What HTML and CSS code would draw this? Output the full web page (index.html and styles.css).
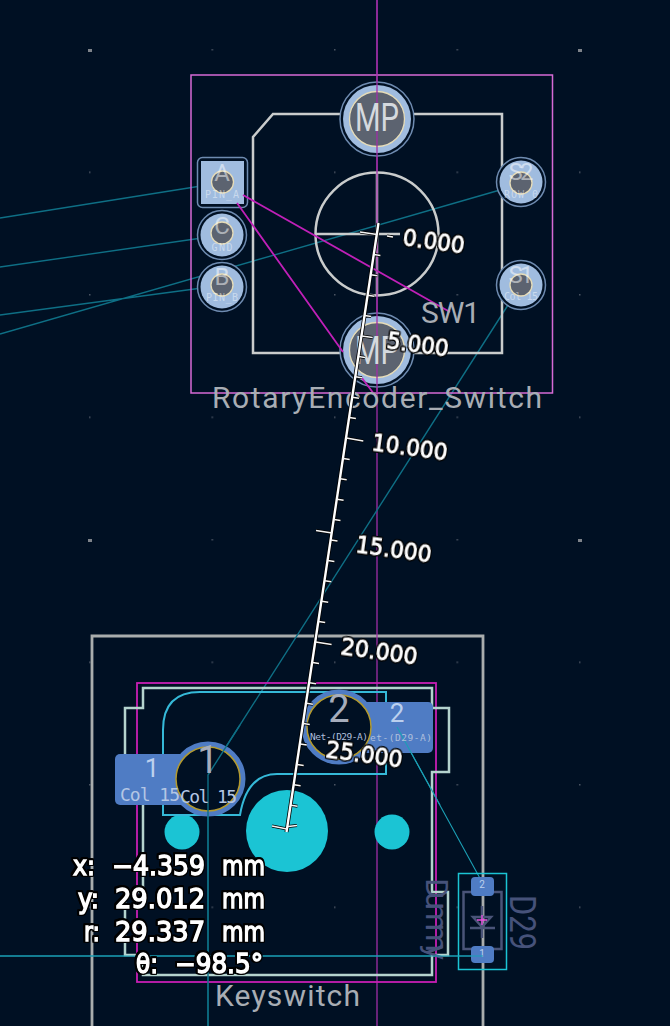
FILE: index.html
```html
<!DOCTYPE html>
<html lang="en">
<head>
    <meta charset="UTF-8">
    <meta name="viewport" content="width=device-width, initial-scale=1.0">
    <title>PCB Editor - Measure Tool</title>
    <link rel="stylesheet" href="styles.css">
</head>
<body>
    <svg id="board" width="670" height="1026" viewBox="0 0 670 1026">
        <defs>
            <pattern id="grid-small" x="89" y="49" width="122.5" height="122.5" patternUnits="userSpaceOnUse">
                <rect class="grid-dot" width="1.500" height="1.500"></rect>
            </pattern>
            <pattern id="grid-big" x="88" y="49" width="490" height="490" patternUnits="userSpaceOnUse">
                <rect class="grid-dot-big" width="4" height="3"></rect>
            </pattern>
            <path id="ruler-main" d="M378.5 223L286.5 832"></path>
            <path id="ruler-ticks" d="M360 232L377 234.500M387 236L393 237
                M373.9 254.4l6.500 1M370.900 274.800l6.500 1M367.800 295.200l6.500 1M364.700 315.600l6.500 1
                M361.700 336l11 1.500M358.600 356.400l6.500 1M355.500 376.800l6.500 1M352.400 397.200l6.500 1M349.400 417.600l6.500 1
                M346.300 438l17 3M343.200 458.400l6.500 1M340.200 478.800l6.500 1M337.100 499.200l6.500 1M334 519.600l6.500 1
                M331 540l6.500 1M332 533l-16 -2.500M327.900 560.400l6.500 1M324.800 580.800l6.500 1M321.700 601.200l6.500 1M318.700 621.600l6.500 1
                M315.600 642l16 2.500M312.500 662.400l6.500 1M309.500 682.800l6.500 1M306.400 703.200l6.500 1M303.300 723.600l6.500 1
                M300.300 744l6.500 1M297.200 764.400l6.500 1M294.100 784.800l6.500 1M291 805.200l6.500 1
                M288 826.500l9 -1M272 826L287 829"></path>
        </defs>

        <rect class="grid" width="670" height="1026" fill="url(#grid-small)"></rect>
        <rect class="grid" width="670" height="1026" fill="url(#grid-big)"></rect>

        <!-- keyswitch footprint, under everything else -->
        <path class="outer-box" d="M92 1030V636H483V1030"></path>
        <line class="axis" x1="377" y1="0" x2="377" y2="1026"></line>

        <!-- ratsnest -->
        <path class="rats" d="M0 218L201 186M0 267L202 238M0 315L202 288M0 334L500 190M208 1026V775L508 305"></path>
        <path class="rats-bright" d="M0 956H483M397 727L482 882"></path>

        <!-- encoder -->
        <rect class="courtyard-pink" x="191" y="75" width="361.500" height="318"></rect>
        <path class="silk" d="M273 114H502V353H253V137Z"></path>
        <circle class="silk" cx="377" cy="234" r="61.500"></circle>
        <path class="silk" d="M316 234H400M377 173V295"></path>

        <g class="pad-tht">
            <circle class="ring" cx="377" cy="119" r="37"></circle>
            <circle class="copper" cx="377" cy="119" r="34"></circle>
            <circle class="hole" cx="377" cy="119" r="27.500"></circle>
            <circle class="ring" cx="377" cy="350" r="37"></circle>
            <circle class="copper" cx="377" cy="350" r="34"></circle>
            <circle class="hole" cx="377" cy="350" r="27.500"></circle>

            <rect class="ring" x="197.500" y="157.500" width="50" height="50" rx="5"></rect>
            <rect class="copper" x="201" y="161" width="43" height="43"></rect>
            <circle class="hole" cx="222.500" cy="182" r="11"></circle>

            <circle class="ring" cx="222" cy="235" r="24.500"></circle>
            <circle class="copper" cx="222" cy="235" r="21.500"></circle>
            <circle class="hole" cx="222" cy="233" r="11"></circle>

            <circle class="ring" cx="222" cy="287" r="24.500"></circle>
            <circle class="copper" cx="222" cy="287" r="21.500"></circle>
            <circle class="hole" cx="222" cy="285" r="11"></circle>

            <circle class="ring" cx="521" cy="182" r="24.500"></circle>
            <circle class="copper" cx="521" cy="182" r="21.500"></circle>
            <circle class="hole" cx="521" cy="183" r="11"></circle>

            <circle class="ring" cx="521" cy="285" r="24.500"></circle>
            <circle class="copper" cx="521" cy="285" r="21.500"></circle>
            <circle class="hole" cx="521" cy="285" r="11"></circle>
        </g>

        <path class="rats-pink" d="M243 195L450 312M237 203L343 352M362 378L377 398"></path>
        <line class="axis" x1="377" y1="0" x2="377" y2="393"></line>

        <text class="pad-big" x="377" y="131" text-anchor="middle" textLength="44" lengthAdjust="spacingAndGlyphs">MP</text>
        <text class="pad-big" x="377" y="364" text-anchor="middle" textLength="44" lengthAdjust="spacingAndGlyphs">MP</text>
        <text class="pad-mid" x="222" y="181" text-anchor="middle">A</text>
        <text class="pad-small" x="222" y="198" text-anchor="middle" textLength="34">PIN_A</text>
        <text class="pad-mid" x="222" y="234" text-anchor="middle">C</text>
        <text class="pad-small" x="222" y="251" text-anchor="middle" textLength="21">GND</text>
        <text class="pad-mid" x="222" y="285" text-anchor="middle">B</text>
        <text class="pad-small" x="222" y="301" text-anchor="middle" textLength="32">PIN_B</text>
        <text class="pad-mid" x="521" y="180" text-anchor="middle" textLength="25">S2</text>
        <text class="pad-small" x="521" y="198" text-anchor="middle" textLength="34">ROW 0</text>
        <text class="pad-mid" x="521" y="283" text-anchor="middle" textLength="25">S1</text>
        <text class="pad-small" x="521" y="300" text-anchor="middle" textLength="34">Col 15</text>

        <text class="ref" x="421" y="323" textLength="59">SW1</text>
        <text class="ref" x="212" y="408" textLength="330">RotaryEncoder_Switch</text>

        <!-- keyswitch -->
        <circle class="cyan-fill" cx="287" cy="831" r="41"></circle>
        <circle class="cyan-fill" cx="182" cy="832" r="17.500"></circle>
        <circle class="cyan-fill" cx="392" cy="832" r="17.500"></circle>

        <rect class="courtyard" x="137" y="683" width="299" height="299"></rect>
        <path class="fab" d="M143 708V688H432V708H449V772H432V892H448V955H432V975H143V955H125V892H143V772H125V708Z"></path>
        <path class="edge" d="M386 692H200Q163 692 163 730V815H240Q247 774 277 774H386Z"></path>

        <rect class="smd" x="115" y="754" width="100" height="51" rx="5"></rect>
        <rect class="smd" x="360" y="702" width="73" height="51" rx="5"></rect>
        <circle class="tht-ring" cx="208" cy="779" r="34.500"></circle>
        <circle class="tht-ring" cx="339" cy="727" r="34.500"></circle>
        <circle class="tht-hole" cx="208" cy="779" r="32"></circle>
        <circle class="tht-hole" cx="339" cy="727" r="32"></circle>

        <path class="rats" d="M208 1026V775L240 725"></path>
        <path class="rats-bright" d="M397 727L440 805"></path>

        <text class="fp-mid" x="152" y="777" text-anchor="middle">1</text>
        <text class="fp-note" x="120" y="801" textLength="60">Col 15</text>
        <text class="fp-big" x="208" y="773" text-anchor="middle">1</text>
        <text class="fp-note" x="180" y="803" textLength="57">Col 15</text>
        <text class="fp-big" x="339" y="722" text-anchor="middle">2</text>
        <text class="fp-tiny" x="310" y="740" textLength="58">Net-(D29-A)</text>
        <text class="fp-mid" x="397" y="722" text-anchor="middle">2</text>
        <text class="fp-tiny" x="370" y="741" textLength="62">et-(D29-A)</text>
        <text class="ref" x="215" y="1006" textLength="145">Keyswitch</text>

        <!-- diode -->
        <text class="dim-text dummy" transform="translate(426 878) rotate(90)" textLength="82">Dummy</text>
        <rect class="diode-body" x="463.500" y="892" width="38" height="57"></rect>
        <path class="diode-sym" d="M482 906V938M470 928H495M473 917H491L482 927Z"></path>
        <rect class="cyan-box" x="458.500" y="873.500" width="48" height="96"></rect>
        <rect class="smd" x="471" y="877" width="23" height="19" rx="4"></rect>
        <rect class="smd" x="471" y="946" width="23" height="17" rx="4"></rect>
        <text class="diode-pad" x="482" y="888" text-anchor="middle">2</text>
        <text class="diode-pad" x="482" y="957" text-anchor="middle">1</text>
        <path class="cross" d="M477 920H487M482 915V925"></path>
        <text class="dim-text" transform="translate(510 895) rotate(90)" textLength="55" lengthAdjust="spacingAndGlyphs">D29</text>
        <path class="rats-bright" d="M0 956H483"></path>

        <!-- measure tool -->
        <use href="#ruler-main" class="ruler-shadow main"></use>
        <use href="#ruler-ticks" class="ruler-shadow"></use>
        <use href="#ruler-main" class="ruler-line main"></use>
        <use href="#ruler-ticks" class="ruler-line"></use>

        <text class="tick-label" transform="translate(402 245) rotate(8)" textLength="62" lengthAdjust="spacingAndGlyphs">0.000</text>
        <text class="tick-label" transform="translate(386 348) rotate(8)" textLength="62" lengthAdjust="spacingAndGlyphs">5.000</text>
        <text class="tick-label" transform="translate(371 450) rotate(8)" textLength="76" lengthAdjust="spacingAndGlyphs">10.000</text>
        <text class="tick-label" transform="translate(355 552) rotate(8)" textLength="76" lengthAdjust="spacingAndGlyphs">15.000</text>
        <text class="tick-label" transform="translate(340 654) rotate(8)" textLength="77" lengthAdjust="spacingAndGlyphs">20.000</text>
        <text class="tick-label" transform="translate(325 757) rotate(8)" textLength="77" lengthAdjust="spacingAndGlyphs">25.000</text>

        <text class="readout" x="73" y="875" textLength="22" lengthAdjust="spacingAndGlyphs">x:</text>
        <text class="readout" x="112" y="875" textLength="93" lengthAdjust="spacingAndGlyphs">−4.359</text>
        <text class="readout" x="222" y="875" textLength="43" lengthAdjust="spacingAndGlyphs">mm</text>
        <text class="readout" x="78" y="908" textLength="21" lengthAdjust="spacingAndGlyphs">y:</text>
        <text class="readout" x="115" y="908" textLength="90" lengthAdjust="spacingAndGlyphs">29.012</text>
        <text class="readout" x="222" y="908" textLength="43" lengthAdjust="spacingAndGlyphs">mm</text>
        <text class="readout" x="84" y="941" textLength="16" lengthAdjust="spacingAndGlyphs">r:</text>
        <text class="readout" x="115" y="941" textLength="90" lengthAdjust="spacingAndGlyphs">29.337</text>
        <text class="readout" x="222" y="941" textLength="43" lengthAdjust="spacingAndGlyphs">mm</text>
        <text class="readout" x="136" y="973" textLength="22" lengthAdjust="spacingAndGlyphs">θ:</text>
        <text class="readout" x="175" y="973" textLength="88" lengthAdjust="spacingAndGlyphs">−98.5°</text>
    </svg>
</body>
</html>
```
FILE: styles.css
```css
body {
    margin: 0;
    background-color: #001023;
    overflow: hidden;
}
#board {
    display: block;
    fill: none;
}
.grid-dot {
    fill: #4a5362;
}
.grid-dot-big {
    fill: #7e838a;
}
.axis {
    stroke: #a02fa8;
    stroke-width: 1.3;
}
.outer-box {
    stroke: #a9adad;
    stroke-width: 2.8;
}
.rats {
    stroke: #0e6f85;
    stroke-width: 1.4;
}
.rats-bright {
    stroke: #1ba0b5;
    stroke-width: 1.1;
}
.rats-pink {
    stroke: #c020b8;
    stroke-width: 1.8;
}
.courtyard-pink {
    stroke: #d66ad6;
    stroke-width: 1.5;
}
.courtyard {
    stroke: #c71fb4;
    stroke-width: 1.8;
}
.silk {
    stroke: #c9cccc;
    stroke-width: 2.5;
}
.fab {
    stroke: #b4d3ce;
    stroke-width: 2.5;
}
.edge {
    stroke: #35b9d8;
    stroke-width: 2;
}
.ring {
    fill: #001023;
    stroke: #6e8bb0;
    stroke-width: 1.5;
}
.copper {
    fill: #a0bcdf;
}
.hole {
    fill: #5c6370;
    stroke: #e6dcb8;
    stroke-width: 1.3;
}
.cyan-fill {
    fill: #1bc4d4;
}
.cyan-box {
    stroke: #1bc4d4;
    stroke-width: 1.5;
}
.smd {
    fill: #4f7cc4;
}
.tht-ring {
    fill: #4f7cc4;
    stroke: #4f7cc4;
    stroke-width: 6;
}
.tht-hole {
    fill: #001023;
    stroke: #b39a2e;
    stroke-width: 1.5;
}
.diode-body {
    stroke: #4a5478;
    stroke-width: 2.5;
}
.diode-sym {
    stroke: #4a5478;
    stroke-width: 2.5;
}
.cross {
    stroke: #f04fe0;
    stroke-width: 1.3;
}

/* board text, thin like the stroke font */
text {
    font-family: Roboto, "DejaVu Sans", sans-serif;
    font-weight: 400;
}
.pad-big {
    font-size: 38px;
    fill: #d5d9de;
}
.pad-mid {
    font-size: 24px;
    fill: rgba(255, 255, 255, 0.5);
}
.pad-small {
    font-family: "DejaVu Sans Mono", monospace;
    font-size: 10px;
    fill: rgba(255, 255, 255, 0.45);
}
.ref {
    font-size: 30px;
    fill: #a8adb4;
}
.fp-big {
    font-size: 38px;
    fill: #a6adbc;
}
.fp-mid {
    font-size: 26px;
    fill: #bcd0ee;
}
.fp-note {
    font-family: "DejaVu Sans Mono", monospace;
    font-size: 18px;
    fill: #b4c6e4;
}
.fp-tiny {
    font-family: "DejaVu Sans Mono", monospace;
    font-size: 9.500px;
    fill: #aebfdc;
}
.diode-pad {
    font-size: 10px;
    fill: #bcd0ee;
}
.dim-text {
    font-size: 36px;
    fill: #46527a;
}
.dummy {
    font-size: 32px;
}

/* measure tool overlay */
.ruler-shadow {
    stroke: #000;
    stroke-width: 3;
}
.ruler-shadow.main {
    stroke-width: 4;
}
.ruler-line {
    stroke: #f4f4f4;
    stroke-width: 1.5;
}
.ruler-line.main {
    stroke: #fff;
    stroke-width: 2.4;
}
.tick-label {
    font-family: "DejaVu Sans", sans-serif;
    font-size: 23px;
    fill: #fff;
    stroke: #fff;
    stroke-width: 0.9px;
    filter: drop-shadow(1px 0 0 #000) drop-shadow(-1px 0 0 #000) drop-shadow(0 1px 0 #000) drop-shadow(0 -1px 0 #000);
}
.readout {
    font-family: "DejaVu Sans", sans-serif;
    font-size: 27px;
    fill: #fff;
    stroke: #fff;
    stroke-width: 1.4px;
    filter: drop-shadow(1.3px 0 0 #000) drop-shadow(-1.3px 0 0 #000) drop-shadow(0 1.3px 0 #000) drop-shadow(0 -1.3px 0 #000);
}
```
